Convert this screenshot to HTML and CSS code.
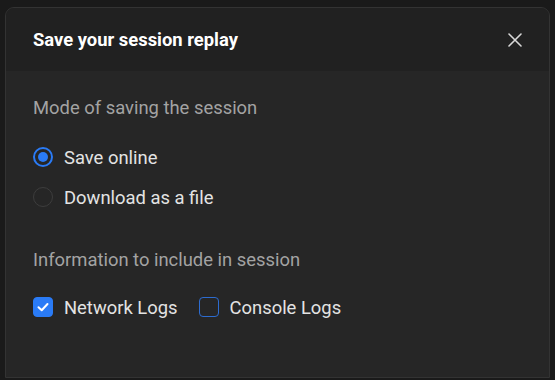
FILE: index.html
```html
<!DOCTYPE html>
<html>
<head>
<meta charset="utf-8">
<link rel="stylesheet" href="styles.css">
</head>
<body>
<div class="dialog">
  <div class="header">
    <h1 class="title">Save your session replay</h1>
    <button class="close" aria-label="Close">
      <svg width="14" height="14" viewBox="0 0 14 14"><path d="M1 1L13 13M13 1L1 13" stroke="#d8d8d8" stroke-width="1.6" stroke-linecap="round"/></svg>
    </button>
  </div>
  <div class="content">
    <div class="section-label">Mode of saving the session</div>
    <div class="radios">
      <label class="option"><span class="radio checked"></span>Save online</label>
      <label class="option"><span class="radio"></span>Download as a file</label>
    </div>
    <div class="section-label second">Information to include in session</div>
    <div class="checks">
      <label class="option"><span class="check checked"><svg width="14" height="14" viewBox="0 0 14 14"><path d="M2.5 7.2L5.7 10.2L11.5 4" fill="none" stroke="#fff" stroke-width="2" stroke-linecap="round" stroke-linejoin="round"/></svg></span>Network Logs</label>
      <label class="option"><span class="check"></span>Console Logs</label>
    </div>
  </div>
</div>
</body>
</html>
```

FILE: styles.css
```css
html, body {
  margin: 0;
  padding: 0;
  background: #1a1a1a;
  font-family: Roboto, "Noto Sans", sans-serif;
  overflow: hidden;
}
.dialog {
  margin: 7px 5px 0 5px;
  width: 543px;
  height: 369px;
  border: 1px solid #333333;
  border-radius: 9px 9px 0 0;
  background: #262626;
  overflow: hidden;
}
.header {
  height: 63px;
  background: #212121;
  display: flex;
  align-items: center;
  justify-content: space-between;
  padding: 0 27px 0 27px;
}
.title {
  margin: 0;
  font-size: 18.4px;
  font-weight: 700;
  color: #ffffff;
  line-height: 24px;
  padding-top: 1px;
}
.close {
  background: none;
  border: none;
  padding: 0;
  width: 14px;
  height: 14px;
  display: flex;
  cursor: pointer;
}
.content {
  padding: 25px 27px;
}
.section-label {
  font-size: 18.4px;
  line-height: 24px;
  color: #a3a3a3;
}
.section-label.second {
  margin-top: 31px;
}
.radios {
  margin-top: 17px;
  display: flex;
  flex-direction: column;
}
.option {
  display: flex;
  align-items: center;
  height: 40px;
  font-size: 18.4px;
  color: #e3e3e3;
}
.radio {
  width: 20px;
  height: 20px;
  box-sizing: border-box;
  border-radius: 50%;
  border: 1px solid #3d3d3d;
  margin-right: 11px;
  display: flex;
  align-items: center;
  justify-content: center;
}
.radio.checked {
  border: 2px solid #2a7bf6;
}
.radio.checked::after {
  content: "";
  width: 10px;
  height: 10px;
  border-radius: 50%;
  background: #2a7bf6;
}
.checks {
  margin-top: 15px;
  display: flex;
  gap: 21px;
}
.check {
  width: 20px;
  height: 20px;
  box-sizing: border-box;
  border-radius: 4px;
  border: 1.5px solid #2d6cd0;
  margin-right: 11px;
  display: flex;
  align-items: center;
  justify-content: center;
}
.check.checked {
  background: #2a7bf6;
  border-color: #2a7bf6;
}
```
